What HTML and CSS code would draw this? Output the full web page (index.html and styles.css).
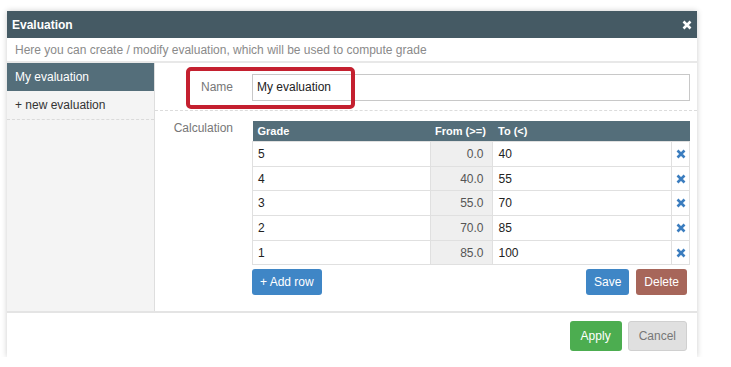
FILE: index.html
```html
<!DOCTYPE html>
<html lang="en">
<head>
    <meta charset="UTF-8">
    <meta name="viewport" content="width=device-width, initial-scale=1.0">
    <title>Evaluation</title>
    <link rel="stylesheet" href="styles.css">
</head>
<body>
    <div class="modal">
        <div class="modal-header">
            <span class="modal-title">Evaluation</span>
            <svg class="close" width="10" height="10" viewBox="0 0 10 10"><path d="M1.5 1.5 L8.5 8.5 M8.5 1.5 L1.5 8.5" stroke="#fff" stroke-width="2.6"/></svg>
        </div>
        <div class="modal-desc">Here you can create / modify evaluation, which will be used to compute grade</div>

        <div class="modal-body">
            <div class="sidebar">
                <div class="side-item active">My evaluation</div>
                <div class="side-item">+ new evaluation</div>
            </div>

            <div class="main">
                <div class="form-row name-row">
                    <label class="form-label">Name</label>
                    <input class="form-input" type="text" value="My evaluation">
                    <div class="highlight"></div>
                </div>

                <div class="form-row calc-row">
                    <label class="form-label">Calculation</label>
                    <div class="calc">
                        <table class="grade-table">
                            <thead>
                                <tr><th class="col-grade">Grade</th><th class="col-from">From (&gt;=)</th><th class="col-to">To (&lt;)</th><th class="col-del"></th></tr>
                            </thead>
                            <tbody id="gradeRows"></tbody>
                        </table>
                        <div class="calc-actions">
                            <button class="btn btn-blue">+ Add row</button>
                            <span class="spacer"></span>
                            <button class="btn btn-blue">Save</button>
                            <button class="btn btn-brown">Delete</button>
                        </div>
                    </div>
                </div>
            </div>
        </div>

        <div class="modal-footer">
            <button class="btn btn-green btn-lg">Apply</button>
            <button class="btn btn-grey btn-lg">Cancel</button>
        </div>
    </div>

    <script>
        const grades = [
            { grade: 5, from: "0.0", to: 40 },
            { grade: 4, from: "40.0", to: 55 },
            { grade: 3, from: "55.0", to: 70 },
            { grade: 2, from: "70.0", to: 85 },
            { grade: 1, from: "85.0", to: 100 }
        ];

        const cross = '<svg width="10" height="10" viewBox="0 0 10 10"><path d="M1.5 1.5 L8.5 8.5 M8.5 1.5 L1.5 8.5" stroke="#3b7dbf" stroke-width="2.6"/></svg>';

        document.getElementById("gradeRows").innerHTML = grades.map(g =>
            `<tr><td>${g.grade}</td><td class="from">${g.from}</td><td>${g.to}</td><td class="del">${cross}</td></tr>`
        ).join("");
    </script>
</body>
</html>
```

FILE: styles.css
```css
body {
    margin: 0;
    padding: 0;
    background-color: #fff;
    font-family: "Liberation Sans", Arial, sans-serif;
    font-size: 12px;
    color: #222;
}

.modal {
    width: 690px;
    margin: 11px 0 0 7px;
    background: #fff;
    box-shadow: 0 0 6px rgba(0, 0, 0, 0.2);
}

.modal-header {
    height: 27px;
    background-color: #455a64;
    display: flex;
    align-items: center;
    justify-content: space-between;
    padding: 0 5px 0 5px;
}

.modal-title {
    color: #fff;
    font-weight: bold;
    font-size: 12px;
}

.modal-desc {
    height: 23px;
    line-height: 24px;
    padding-left: 8px;
    color: #8a8a8a;
    border-bottom: 2px solid #e8e8e8;
}

.modal-body {
    display: flex;
    height: 248px;
}

.sidebar {
    width: 147px;
    background-color: #f4f4f4;
    border-right: 1px solid #dedede;
}

.side-item {
    height: 28px;
    line-height: 28px;
    padding-left: 8px;
    color: #333;
    border-bottom: 1px dashed #dadada;
}

.side-item.active {
    background-color: #546e7a;
    color: #fff;
    border-bottom: none;
}

.main {
    flex: 1;
}

.form-row {
    display: flex;
    padding-right: 7px;
}

.form-label {
    width: 78px;
    margin-right: 19px;
    text-align: right;
    color: #777;
}

.name-row {
    position: relative;
    align-items: center;
    height: 47px;
    border-bottom: 1px dashed #dcdcdc;
}

.form-input {
    flex: 1;
    height: 27px;
    box-sizing: border-box;
    border: 1px solid #c8c8c8;
    padding: 0 4px;
    font-family: inherit;
    font-size: 12px;
    color: #222;
    margin-top: 1px;
}

/* red annotation box drawn over the name field */
.highlight {
    position: absolute;
    left: 31px;
    top: 4px;
    width: 161px;
    height: 34px;
    border: 4px solid #c4202f;
    border-radius: 5px;
}

.calc-row {
    padding-top: 10px;
}

.calc-row .form-label {
    line-height: 14px;
}

.calc {
    flex: 1;
}

.grade-table {
    width: 100%;
    border-collapse: collapse;
}

.grade-table th {
    background-color: #546e7a;
    color: #fff;
    font-size: 11px;
    font-weight: bold;
    text-align: left;
    height: 20px;
    padding: 0 5px;
}

.grade-table .col-grade { width: 168px; }
.grade-table .col-from { width: 53px; }
.grade-table .col-to { width: 169px; }
.grade-table .col-del { width: 8px; }

.grade-table td {
    height: 23.7px;
    padding: 0 5px;
    border: 1px solid #e0e0e0;
    color: #222;
}

.grade-table td.from {
    background-color: #efefef;
    color: #555;
    text-align: right;
    padding-right: 9px;
}

.grade-table td.del {
    padding: 0;
    text-align: center;
}

.grade-table td.del svg { display: block; margin: 0 auto; }

.calc-actions {
    display: flex;
    margin-top: 4px;
    padding-right: 3px;
}

.spacer { flex: 1; }

.btn {
    height: 26px;
    padding: 0 8px;
    font-family: inherit;
    font-size: 12px;
    color: #fff;
    border: none;
    border-radius: 3px;
    cursor: pointer;
}

.btn-blue { background-color: #3f86c6; }
.btn-brown { background-color: #a7665a; margin-left: 7px; }
.btn-green { background-color: #4cad50; padding: 0 11px; }

.btn-grey {
    background-color: #e0e0e0;
    color: #777;
    border: 1px solid #d0d0d0;
    margin-left: 6px;
}

.btn-lg {
    height: 30px;
}

.btn-grey.btn-lg { padding: 0 10px; }

.modal-footer {
    display: flex;
    justify-content: flex-end;
    border-top: 2px solid #e4e4e4;
    height: 46px;
    padding: 8px 10px 0 0;
    box-sizing: border-box;
}
```
